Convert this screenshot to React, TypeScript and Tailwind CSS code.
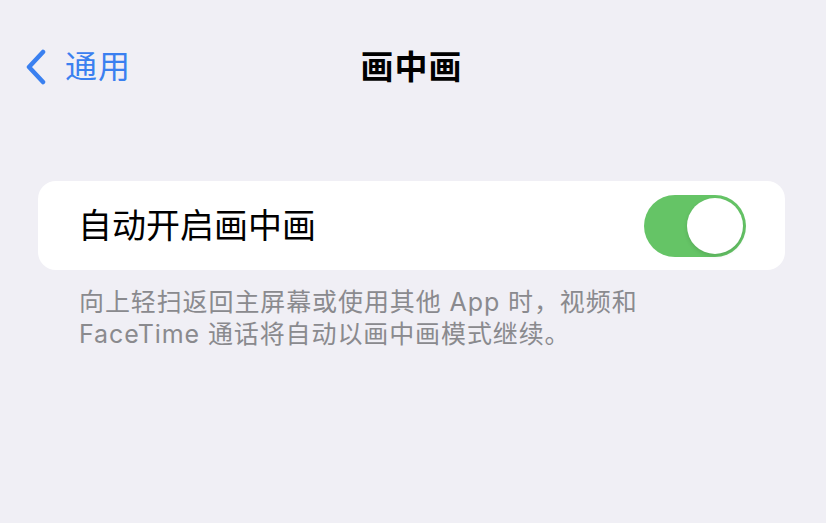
export default function App() {
  const font = { fontFamily: '"Inter", "Noto Sans CJK SC", sans-serif' };
  return (
    <div className="w-[826px] h-[523px] bg-[#f0eff5] overflow-hidden" style={font}>
      <div className="relative h-[134px] flex items-start pt-[48px]">
        <div className="flex items-center pl-[25px] gap-[18px] h-[38px]">
          <svg width="22" height="36" viewBox="0 0 22 36" fill="none">
            <path d="M18 3 L4 18 L18 33" stroke="#3a80f0" strokeWidth="4.5" strokeLinecap="round" strokeLinejoin="round" />
          </svg>
          <span className="text-[32px] leading-none text-[#3a80f0] tracking-[1px]">通用</span>
        </div>
        <div className="absolute left-0 right-0 top-[48px] h-[38px] flex items-center justify-center pointer-events-none">
          <span className="text-[33px] leading-none font-bold text-black tracking-[1px] ml-[-3px]">画中画</span>
        </div>
      </div>
      <div className="ml-[38px] mr-[41px] mt-[47px] h-[89px] bg-white rounded-[18px] flex items-center justify-between pl-[40px] pr-[39px]">
        <span className="text-[34px] leading-none text-black">自动开启画中画</span>
        <div className="w-[102px] h-[62px] rounded-full bg-[#65c466] flex items-center justify-end pr-[3px]">
          <div className="w-[56px] h-[56px] rounded-full bg-white shadow-[0_2px_4px_rgba(0,0,0,0.12)]" />
        </div>
      </div>
      <div className="pl-[79px] pt-[16px] text-[25px] leading-[32px] tracking-[0.9px] text-[#8a8a8e]">
        向上轻扫返回主屏幕或使用其他 App 时，视频和
        <br />
        FaceTime 通话将自动以画中画模式继续。
      </div>
    </div>
  );
}
